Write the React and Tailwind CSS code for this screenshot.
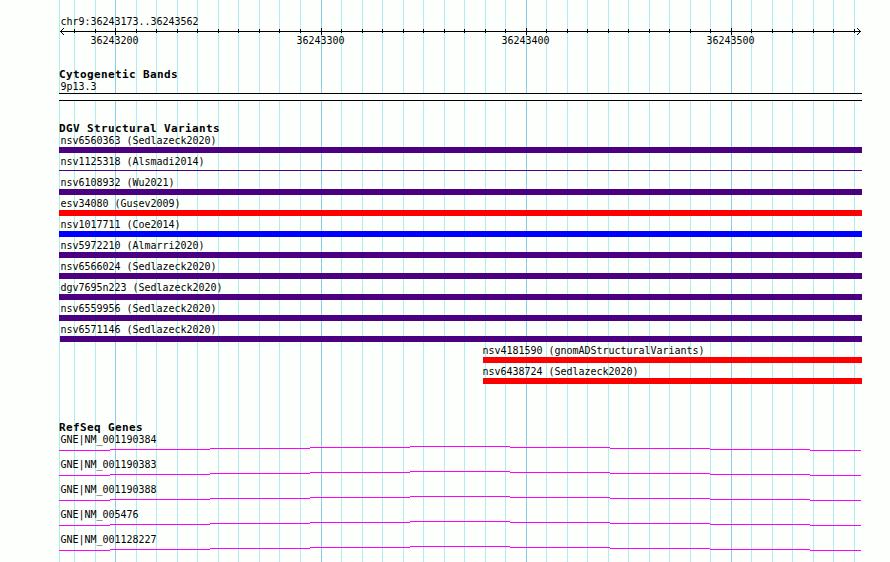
const GRID_X = [
  59, 74, 95, 115, 136, 156, 177, 197, 218, 238, 259, 279, 300, 321, 341, 362, 382, 403, 423, 444,
  464, 485, 505, 526, 546, 567, 587, 608, 628, 649, 669, 690, 710, 731, 751, 772, 792, 813, 833, 854,
];
const MAJOR_X = [115, 321, 526, 731];

const VARIANTS = [
  { label: "nsv6560363 (Sedlazeck2020)", bar: "h-1.5 bg-[#4b0082]" },
  { label: "nsv1125318 (Alsmadi2014)", bar: "mt-0.5 h-px bg-[#4b0082]" },
  { label: "nsv6108932 (Wu2021)", bar: "h-1.5 bg-[#4b0082]" },
  { label: "esv34080 (Gusev2009)", bar: "h-1.5 bg-[#ff0000]" },
  { label: "nsv1017711 (Coe2014)", bar: "h-1.5 bg-[#0000ff]" },
  { label: "nsv5972210 (Almarri2020)", bar: "h-1.5 bg-[#4b0082]" },
  { label: "nsv6566024 (Sedlazeck2020)", bar: "h-1.5 bg-[#4b0082]" },
  { label: "dgv7695n223 (Sedlazeck2020)", bar: "h-1.5 bg-[#4b0082]" },
  { label: "nsv6559956 (Sedlazeck2020)", bar: "h-1.5 bg-[#4b0082]" },
  { label: "nsv6571146 (Sedlazeck2020)", bar: "ml-px h-1.5 bg-[#4b0082]" },
  { label: "nsv4181590 (gnomADStructuralVariants)", bar: "ml-[2px] h-1.5 bg-[#ff0000]", row: "pl-[422px]" },
  { label: "nsv6438724 (Sedlazeck2020)", bar: "ml-[2px] h-1.5 bg-[#ff0000]", row: "pl-[422px]" },
];

const GENES = [
  "GNE|NM_001190384",
  "GNE|NM_001190383",
  "GNE|NM_001190388",
  "GNE|NM_005476",
  "GNE|NM_001128227",
];

// [x, y, width] of each piece of the intron line
const INTRON_STEPS = [
  [0, 4, 51], [51, 3, 100], [151, 2, 100], [251, 1, 100], [351, 0, 100],
  [451, 1, 100], [551, 2, 100], [651, 3, 100], [751, 4, 51],
];

function GridLines() {
  return (
    <svg className="absolute inset-0" width="890" height="562" shapeRendering="crispEdges">
      {GRID_X.map((x) => (
        <rect key={x} x={x} y="0" width="1" height="562" fill={MAJOR_X.includes(x) ? "#87ceeb" : "#afeeee"} />
      ))}
    </svg>
  );
}

function Ruler() {
  return (
    <svg className="block" width="803" height="7" shapeRendering="crispEdges">
      <rect x="1" y="3" width="801" height="1" />
      {GRID_X.slice(1).map((x) =>
        MAJOR_X.includes(x) ? (
          <rect key={x} x={x - 59} y="0" width="1" height="7" />
        ) : (
          <rect key={x} x={x - 59} y="1" width="1" height="4" />
        )
      )}
      {[1, 2, 3].map((n) => (
        <g key={n}>
          <rect x={1 + n} y={3 - n} width="1" height="1" />
          <rect x={1 + n} y={3 + n} width="1" height="1" />
          <rect x={801 - n} y={3 - n} width="1" height="1" />
          <rect x={801 - n} y={3 + n} width="1" height="1" />
        </g>
      ))}
    </svg>
  );
}

function TrackTitle({ children }) {
  return <h2 className="h-3 text-[11px] leading-[14px] font-bold tracking-[0.378px]">{children}</h2>;
}

function Label({ children }) {
  return <p className="h-[13px] pl-[1.5px] leading-[14px]">{children}</p>;
}

export default function App() {
  return (
    <main className="relative h-[562px] w-[890px] overflow-hidden bg-[#fdfffc] font-['DejaVu_Sans_Mono',monospace] text-[10px] tracking-[-0.02px] whitespace-pre text-black">
      <GridLines />

      <div className="relative ml-[59px] w-[803px] pt-[15px]">
        <header>
          <Label>chr9:36243173..36243562</Label>
          <Ruler />
          <div className="flex h-[33px] gap-[158px] pl-[31.5px] leading-3">
            <span className="w-12">36243200</span>
            <span className="w-12">36243300</span>
            <span className="-ml-px w-12">36243400</span>
            <span className="-ml-px w-12">36243500</span>
          </div>
        </header>

        <section className="h-[54px]">
          <TrackTitle>Cytogenetic Bands</TrackTitle>
          <Label>9p13.3</Label>
          <div className="h-2 border-y border-black bg-[#fdfffc]" />
        </section>

        <section className="h-[299px]">
          <TrackTitle>DGV Structural Variants</TrackTitle>
          {VARIANTS.map((variant) => (
            <div key={variant.label} className={`h-[21px] ${variant.row ?? ""}`}>
              <Label>{variant.label}</Label>
              <div className={variant.bar} />
            </div>
          ))}
        </section>

        <section>
          <TrackTitle>RefSeq Genes</TrackTitle>
          {GENES.map((gene) => (
            <div key={gene} className="h-[25px]">
              <Label>{gene}</Label>
              <svg className="block" width="803" height="5" shapeRendering="crispEdges">
                {INTRON_STEPS.map(([x, y, width]) => (
                  <rect key={x} x={x} y={y} width={width} height="1" fill="#ff00ff" />
                ))}
              </svg>
            </div>
          ))}
        </section>
      </div>
    </main>
  );
}
